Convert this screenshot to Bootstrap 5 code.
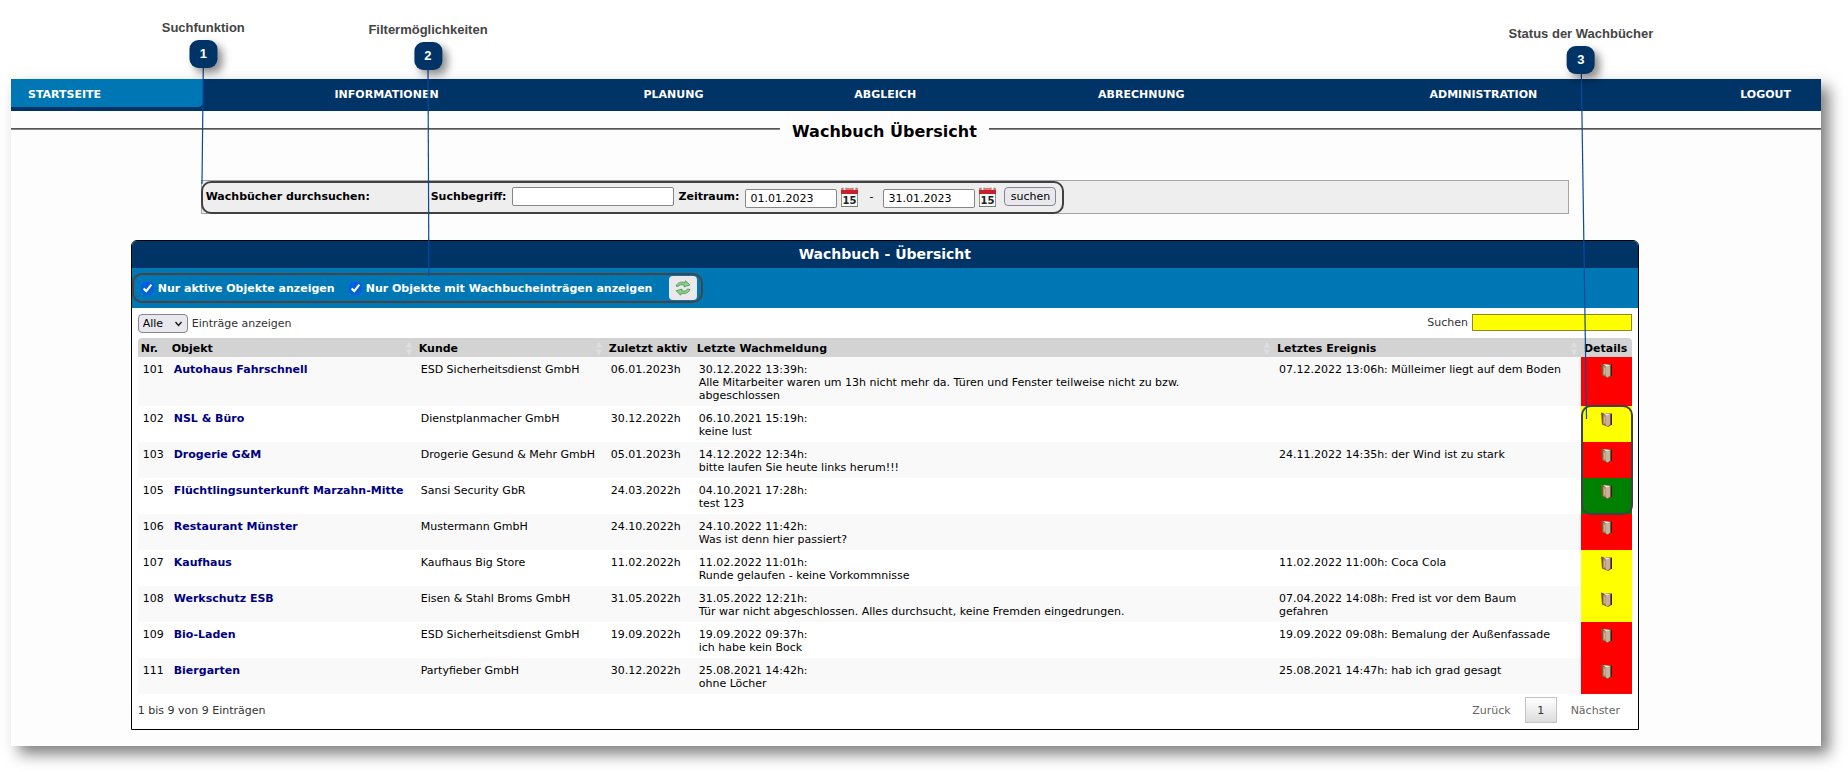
<!DOCTYPE html>
<html lang="de">
<head>
<meta charset="utf-8">
<meta name="viewport" content="width=device-width, initial-scale=1">
<title>Wachbuch Übersicht</title>
<link href="https://cdn.jsdelivr.net/npm/bootstrap@5.3.0/dist/css/bootstrap.min.css" rel="stylesheet">
<style>
  body { font-family: "DejaVu Sans", Verdana, sans-serif; font-size: 11px; line-height: 13px; color: #000; background: #fff; }
  .sheet { margin: 79px 27px 26px 11px; background: #fdfdfd; box-shadow: 8px 8px 14px rgba(0,0,0,.5); padding-bottom: 16px; }
  .sheet-inner { width: 97%; padding-right: 8px; }
  /* main menu */
  .mainnav { background: #036; height: 32px; }
  .mainnav a { height: 28px; line-height: 31px; color: #fff; font-weight: bold; text-decoration: none; text-align: center; }
  .mainnav a.current { background: #0077b5; text-align: left; padding-left: 17px; border-radius: 0 0 5px 0; }
  .mainnav .w-a { width: 10.6%; } .mainnav .w-b { width: 20.3%; } .mainnav .w-c { width: 11.4%; }
  .mainnav .w-d { width: 12%; } .mainnav .w-e { width: 16.3%; } .mainnav .w-f { width: 21.5%; }
  .mainnav .w-g { flex: 1 0 0; text-align: right; padding-right: 30px; }
  /* title rule */
  .title-row h1 { font-size: 16px; line-height: 20px; font-weight: bold; margin: 0; padding: 11px 12px 0; }
  .rule-l, .rule-r { height: 2px; background: #555; margin-top: 17px; flex: 767 1 0; border-bottom: 1px solid #888; }
  .rule-r { flex-grow: 830; }
  /* search */
  .searchbar { width: 78.3%; background: #eee; border: 1px solid #a5a5a5; margin-top: 38px; height: 34px; }
  .ring { border: 2px solid #3f4145; border-radius: 10px; }
  .searchbar .ring { height: 33px; margin-left: -1px; padding: 0 6px 3px 3px; width: max-content; font-weight: bold; }
  .field { border: 1px solid #858585; border-radius: 2px; height: 19px; padding: 1px 4px; background: #fff; color: #000; font-size: 11px; }
  .field-term { width: 162px; margin-left: 6px; } .field-date { width: 92px; }
  .lead-label { width: 225px; }
  .period-label { width: 67px; margin-left: 4px; }
  .dash { width: 24px; text-align: center; }
  .plainbtn { border: 1px solid #858594; border-radius: 4px; background: #e9e9ed; color: #000; height: 19px; width: 52px; padding: 0; margin-left: 7px; font-size: 11px; }
  .iconbtn { border: 0; background: none; padding: 0; margin-left: 3px; width: 19px; height: 21px; line-height: 0; }
  /* panel */
  .panel { width: 86.3%; margin-top: 26px; border: 1px solid #000; border-radius: 6px 6px 0 0; background: #fff; }
  .panel h2 { background: #036; color: #fff; font-size: 14px; line-height: 27px; font-weight: bold; text-align: center; margin: 0; border-radius: 5px 5px 0 0; }
  .filterbar { background: #0077b5; color: #fff; font-weight: bold; height: 40px; padding: 5px 0; }
  .filterbar .ring { height: 30px; width: max-content; padding: 0 4px 0 7px; border-color: #4a4440; }
  .filterbar input { width: 13px; height: 13px; margin: 0 4px 0 0; accent-color: #0060df; }
  .filterbar .opt-a { width: 191px; } .filterbar .opt-b { width: 303px; }
  .filterbar button { width: 28px; height: 24px; border: 0; border-radius: 4px; background: #e9e9ed; padding: 0; line-height: 0; }
  .panel-body-area { padding: 6px; color: #333; }
  .len { height: 19px; width: 50px; border: 1px solid #858594; border-radius: 4px; background: #e9e9ed; color: #000; font-size: 11px; padding: 0 0 0 4px; appearance: none; -webkit-appearance: none; }
  .chev { right: 6px; top: 7px; pointer-events: none; line-height: 0; }
  .field-filter { width: 160px; height: 17px; border: 1px solid #8a8a20; background: #ff0; padding: 0 3px; font-size: 11px; }
  /* data table */
  .log { table-layout: fixed; width: 100%; border-collapse: separate; border-spacing: 0; margin-top: 5px; color: #000; }
  .log th { background: #d3d3d3; height: 19px; padding: 2px 3px 0; font-weight: bold; white-space: nowrap; vertical-align: middle; position: relative; }
  .log th:first-child { border-radius: 4px 0 0 0; } .log th:last-child { border-radius: 0 4px 0 0; }
  .log td { padding: 6px 5px 4px; vertical-align: top; }
  .log tbody tr:nth-child(odd) td { background: #f9f9f9; }
  .log td a { color: #000080; font-weight: bold; text-decoration: none; white-space: nowrap; }
  .log td:nth-child(3) { white-space: nowrap; }
  .log td:nth-child(5) { padding-right: 28px; }
  .log td:nth-child(6) { padding-right: 16px; }
  .log .c1 { width: 31px; } .log .c2 { width: 247px; } .log .c3 { width: 190px; } .log .c4 { width: 88px; } .log .c6 { width: 307px; } .log .c7 { width: 51px; }
  .log td.st { position: relative; text-align: center; line-height: 0; }
  .log tbody tr td.st-red { background: #f00; } .log tbody tr td.st-yellow { background: #ff0; } .log tbody tr td.st-green { background: #008000; }
  .status-ring { left: 0; right: -1px; top: -1px; height: 110px; z-index: 2; pointer-events: none; }
  .sorter { right: 3px; top: 4px; line-height: 0; }
  .foot { padding-top: 3px; }
  .pager { color: #666; gap: 14px; padding-right: 12px; }
  .pager button { border: 0; background: none; color: #666; padding: 0; font-size: 11px; line-height: 13px; }
  .pager button.now { width: 32px; height: 26px; border: 1px solid #c4c4c4; background: linear-gradient(#fff, #dcdcdc); color: #333; }
  /* notes laid over the page */
  .notes { left: 0; top: 0; width: 100%; height: 430px; pointer-events: none; z-index: 5; }
  .note { transform: translateX(-50%); font-family: "Liberation Sans", Arial, sans-serif; font-weight: bold; font-size: 13px; line-height: 16px; color: #444; white-space: nowrap; text-align: center; }
  .note b { display: block; width: 28px; height: 28px; margin: 4px auto 0; border-radius: 9px; background: #036; color: #fff; line-height: 28px; box-shadow: 5px 5px 8px rgba(0,0,0,.45); }
  .n1 { left: 11%; top: 20px; } .n2 { left: 23.16%; top: 22px; } .n3 { left: 85.55%; top: 26px; }
</style>
</head>
<body class="position-relative">
<svg width="0" height="0" class="position-absolute" aria-hidden="true">
  <defs>
    <symbol id="cal" viewBox="0 0 19 21">
      <rect x="1.500" y="2.500" width="16" height="18" fill="#fafafa" stroke="#8d9591"/>
      <rect x="1" y="2" width="17" height="6" fill="#c8202a"/><rect x="1" y="2" width="17" height="2" fill="#e4787a"/>
      <path d="M4.500 0v4M14.500 0v4" stroke="#fff" stroke-width="2"/><path d="M3 1v3M6 1v3M13 1v3M16 1v3" stroke="#888" stroke-width=".6"/>
      <path d="M1 20.500h17" stroke="#6f7f76"/>
      <text x="9.500" y="17.500" text-anchor="middle" font-family="DejaVu Sans" font-weight="bold" font-size="10" fill="#222">15</text>
    </symbol>
    <symbol id="book" viewBox="0 0 11 16">
      <path d="M0 .5 2 1 10 1.500 10.500 13 7 15 1 12.500z" fill="#7a5638"/>
      <path d="M2 3 6 2V13.500L2 12z" fill="#b08d66"/>
      <path d="M2 1 9.500 2 6 4z" fill="#f3ecdc"/>
      <path d="M5 4 9 2.500V12.500L6.500 14.500 5 13.500z" fill="#c9b09c"/>
      <path d="M3 5 4.500 4.500v7L3 11z" fill="#cbb28c"/>
      <path d="M10.500 1.500V13" stroke="#2e2018"/>
    </symbol>
    <symbol id="sort" viewBox="0 0 8 13"><path d="M4 0l3.500 5.500h-7zM4 13l3.500-5.500h-7z" fill="#dedede"/></symbol>
  </defs>
</svg>

<div class="notes position-absolute" aria-hidden="true">
  <svg class="position-absolute top-0 start-0" width="100%" height="430" stroke="#0a4b9c" stroke-width="1.200">
    <line x1="11%" y1="67" x2="10.930%" y2="184"/>
    <line x1="23.160%" y1="69" x2="23.210%" y2="276"/>
    <line x1="85.570%" y1="73" x2="85.850%" y2="419"/>
  </svg>
  <div class="note n1 position-absolute">Suchfunktion<b>1</b></div>
  <div class="note n2 position-absolute">Filtermöglichkeiten<b>2</b></div>
  <div class="note n3 position-absolute">Status der Wachbücher<b>3</b></div>
</div>

<main class="sheet">
  <nav class="mainnav d-flex">
    <a href="#" class="w-a current">STARTSEITE</a><a href="#" class="w-b">INFORMATIONEN</a><a href="#" class="w-c">PLANUNG</a><a href="#" class="w-d">ABGLEICH</a><a href="#" class="w-e">ABRECHNUNG</a><a href="#" class="w-f">ADMINISTRATION</a><a href="#" class="w-g">LOGOUT</a>
  </nav>
  <div class="title-row d-flex align-items-start">
    <span class="rule-l"></span><h1>Wachbuch Übersicht</h1><span class="rule-r"></span>
  </div>
  <div class="sheet-inner">
    <form class="searchbar mx-auto" onsubmit="return false">
      <div class="ring d-flex align-items-center">
        <label for="term" class="d-flex"><span class="lead-label">Wachbücher durchsuchen:</span>Suchbegriff:</label>
        <input id="term" class="field field-term" type="text">
        <label for="from" class="period-label">Zeitraum:</label>
        <input id="from" class="field field-date mt-1" type="text" value="01.01.2023">
        <button type="button" class="iconbtn" aria-label="Kalender"><svg width="19" height="21"><use href="#cal"/></svg></button>
        <label for="to" class="fw-normal dash">-</label>
        <input id="to" class="field field-date mt-1" type="text" value="31.01.2023">
        <button type="button" class="iconbtn" aria-label="Kalender"><svg width="19" height="21"><use href="#cal"/></svg></button>
        <button type="submit" class="plainbtn">suchen</button>
      </div>
    </form>
    <section class="panel mx-auto">
      <h2>Wachbuch - Übersicht</h2>
      <div class="filterbar">
        <div class="ring d-flex align-items-center">
          <input type="checkbox" id="act" checked><label for="act" class="opt-a">Nur aktive Objekte anzeigen</label>
          <input type="checkbox" id="ent" checked><label for="ent" class="opt-b">Nur Objekte mit Wachbucheinträgen anzeigen</label>
          <button type="button" aria-label="Aktualisieren"><svg width="18" height="16" viewBox="0 0 18 16" stroke-width=".8" stroke-linejoin="round"><path d="M2 6C3.500 2.500 7 1.500 11 2.500L11.500.8 15.800 5 10 6.800 10.400 5C7.500 4.300 5.500 4.800 4 6.500z" fill="#8fd08a" stroke="#3f9048"/><path d="M16 9.500C14.500 13 11 14.300 7 13.300L6.500 15.200 2.200 10.800 8 9 7.600 10.800C10.500 11.500 12.500 11 13.500 9z" fill="#8fd08a" stroke="#3f9048"/></svg></button>
        </div>
      </div>
      <div class="panel-body-area">
        <div class="d-flex justify-content-between align-items-start">
          <div class="d-flex align-items-center">
            <span class="position-relative me-1"><select id="len" class="len d-block"><option>Alle</option></select><span class="chev position-absolute"><svg width="7" height="6" viewBox="0 0 7 6"><path d="M.5 1 3.500 4.500 6.500 1" fill="none" stroke="#111" stroke-width="1.300"/></svg></span></span>
            <label for="len">Einträge anzeigen</label>
          </div>
          <div class="d-flex align-items-center"><label for="flt" class="me-1">Suchen</label><input id="flt" type="text" class="field-filter"></div>
        </div>
        <table class="log">
          <thead><tr>
            <th class="c1">Nr.</th>
            <th class="c2">Objekt<span class="sorter position-absolute"><svg width="8" height="13"><use href="#sort"/></svg></span></th>
            <th class="c3">Kunde<span class="sorter position-absolute"><svg width="8" height="13"><use href="#sort"/></svg></span></th>
            <th class="c4">Zuletzt aktiv</th>
            <th class="c5">Letzte Wachmeldung<span class="sorter position-absolute"><svg width="8" height="13"><use href="#sort"/></svg></span></th>
            <th class="c6">Letztes Ereignis<span class="sorter position-absolute"><svg width="8" height="13"><use href="#sort"/></svg></span></th>
            <th class="c7">Details</th>
          </tr></thead>
          <tbody>
            <tr><td>101</td><td><a href="#">Autohaus Fahrschnell</a></td><td>ESD Sicherheitsdienst GmbH</td><td>06.01.2023h</td><td>30.12.2022 13:39h:<br>Alle Mitarbeiter waren um 13h nicht mehr da. Türen und Fenster teilweise nicht zu bzw. abgeschlossen</td><td>07.12.2022 13:06h: Mülleimer liegt auf dem Boden</td><td class="st st-red"><svg width="11" height="16"><use href="#book"/></svg></td></tr>
            <tr><td>102</td><td><a href="#">NSL &amp; Büro</a></td><td>Dienstplanmacher GmbH</td><td>30.12.2022h</td><td>06.10.2021 15:19h:<br>keine lust</td><td></td><td class="st st-yellow"><span class="ring status-ring position-absolute"></span><svg width="11" height="16"><use href="#book"/></svg></td></tr>
            <tr><td>103</td><td><a href="#">Drogerie G&amp;M</a></td><td>Drogerie Gesund &amp; Mehr GmbH</td><td>05.01.2023h</td><td>14.12.2022 12:34h:<br>bitte laufen Sie heute links herum!!!</td><td>24.11.2022 14:35h: der Wind ist zu stark</td><td class="st st-red"><svg width="11" height="16"><use href="#book"/></svg></td></tr>
            <tr><td>105</td><td><a href="#">Flüchtlingsunterkunft Marzahn-Mitte</a></td><td>Sansi Security GbR</td><td>24.03.2022h</td><td>04.10.2021 17:28h:<br>test 123</td><td></td><td class="st st-green"><svg width="11" height="16"><use href="#book"/></svg></td></tr>
            <tr><td>106</td><td><a href="#">Restaurant Münster</a></td><td>Mustermann GmbH</td><td>24.10.2022h</td><td>24.10.2022 11:42h:<br>Was ist denn hier passiert?</td><td></td><td class="st st-red"><svg width="11" height="16"><use href="#book"/></svg></td></tr>
            <tr><td>107</td><td><a href="#">Kaufhaus</a></td><td>Kaufhaus Big Store</td><td>11.02.2022h</td><td>11.02.2022 11:01h:<br>Runde gelaufen - keine Vorkommnisse</td><td>11.02.2022 11:00h: Coca Cola</td><td class="st st-yellow"><svg width="11" height="16"><use href="#book"/></svg></td></tr>
            <tr><td>108</td><td><a href="#">Werkschutz ESB</a></td><td>Eisen &amp; Stahl Broms GmbH</td><td>31.05.2022h</td><td>31.05.2022 12:21h:<br>Tür war nicht abgeschlossen. Alles durchsucht, keine Fremden eingedrungen.</td><td>07.04.2022 14:08h: Fred ist vor dem Baum gefahren</td><td class="st st-yellow"><svg width="11" height="16"><use href="#book"/></svg></td></tr>
            <tr><td>109</td><td><a href="#">Bio-Laden</a></td><td>ESD Sicherheitsdienst GmbH</td><td>19.09.2022h</td><td>19.09.2022 09:37h:<br>ich habe kein Bock</td><td>19.09.2022 09:08h: Bemalung der Außenfassade</td><td class="st st-red"><svg width="11" height="16"><use href="#book"/></svg></td></tr>
            <tr><td>111</td><td><a href="#">Biergarten</a></td><td>Partyfieber GmbH</td><td>30.12.2022h</td><td>25.08.2021 14:42h:<br>ohne Löcher</td><td>25.08.2021 14:47h: hab ich grad gesagt</td><td class="st st-red"><svg width="11" height="16"><use href="#book"/></svg></td></tr>
          </tbody>
        </table>
        <div class="foot d-flex justify-content-between align-items-center">
          <div>1 bis 9 von 9 Einträgen</div>
          <div class="pager d-flex align-items-center"><button type="button">Zurück</button><button type="button" class="now">1</button><button type="button">Nächster</button></div>
        </div>
      </div>
    </section>
  </div>
</main>
<script src="https://cdn.jsdelivr.net/npm/bootstrap@5.3.0/dist/js/bootstrap.bundle.min.js"></script>
</body>
</html>
